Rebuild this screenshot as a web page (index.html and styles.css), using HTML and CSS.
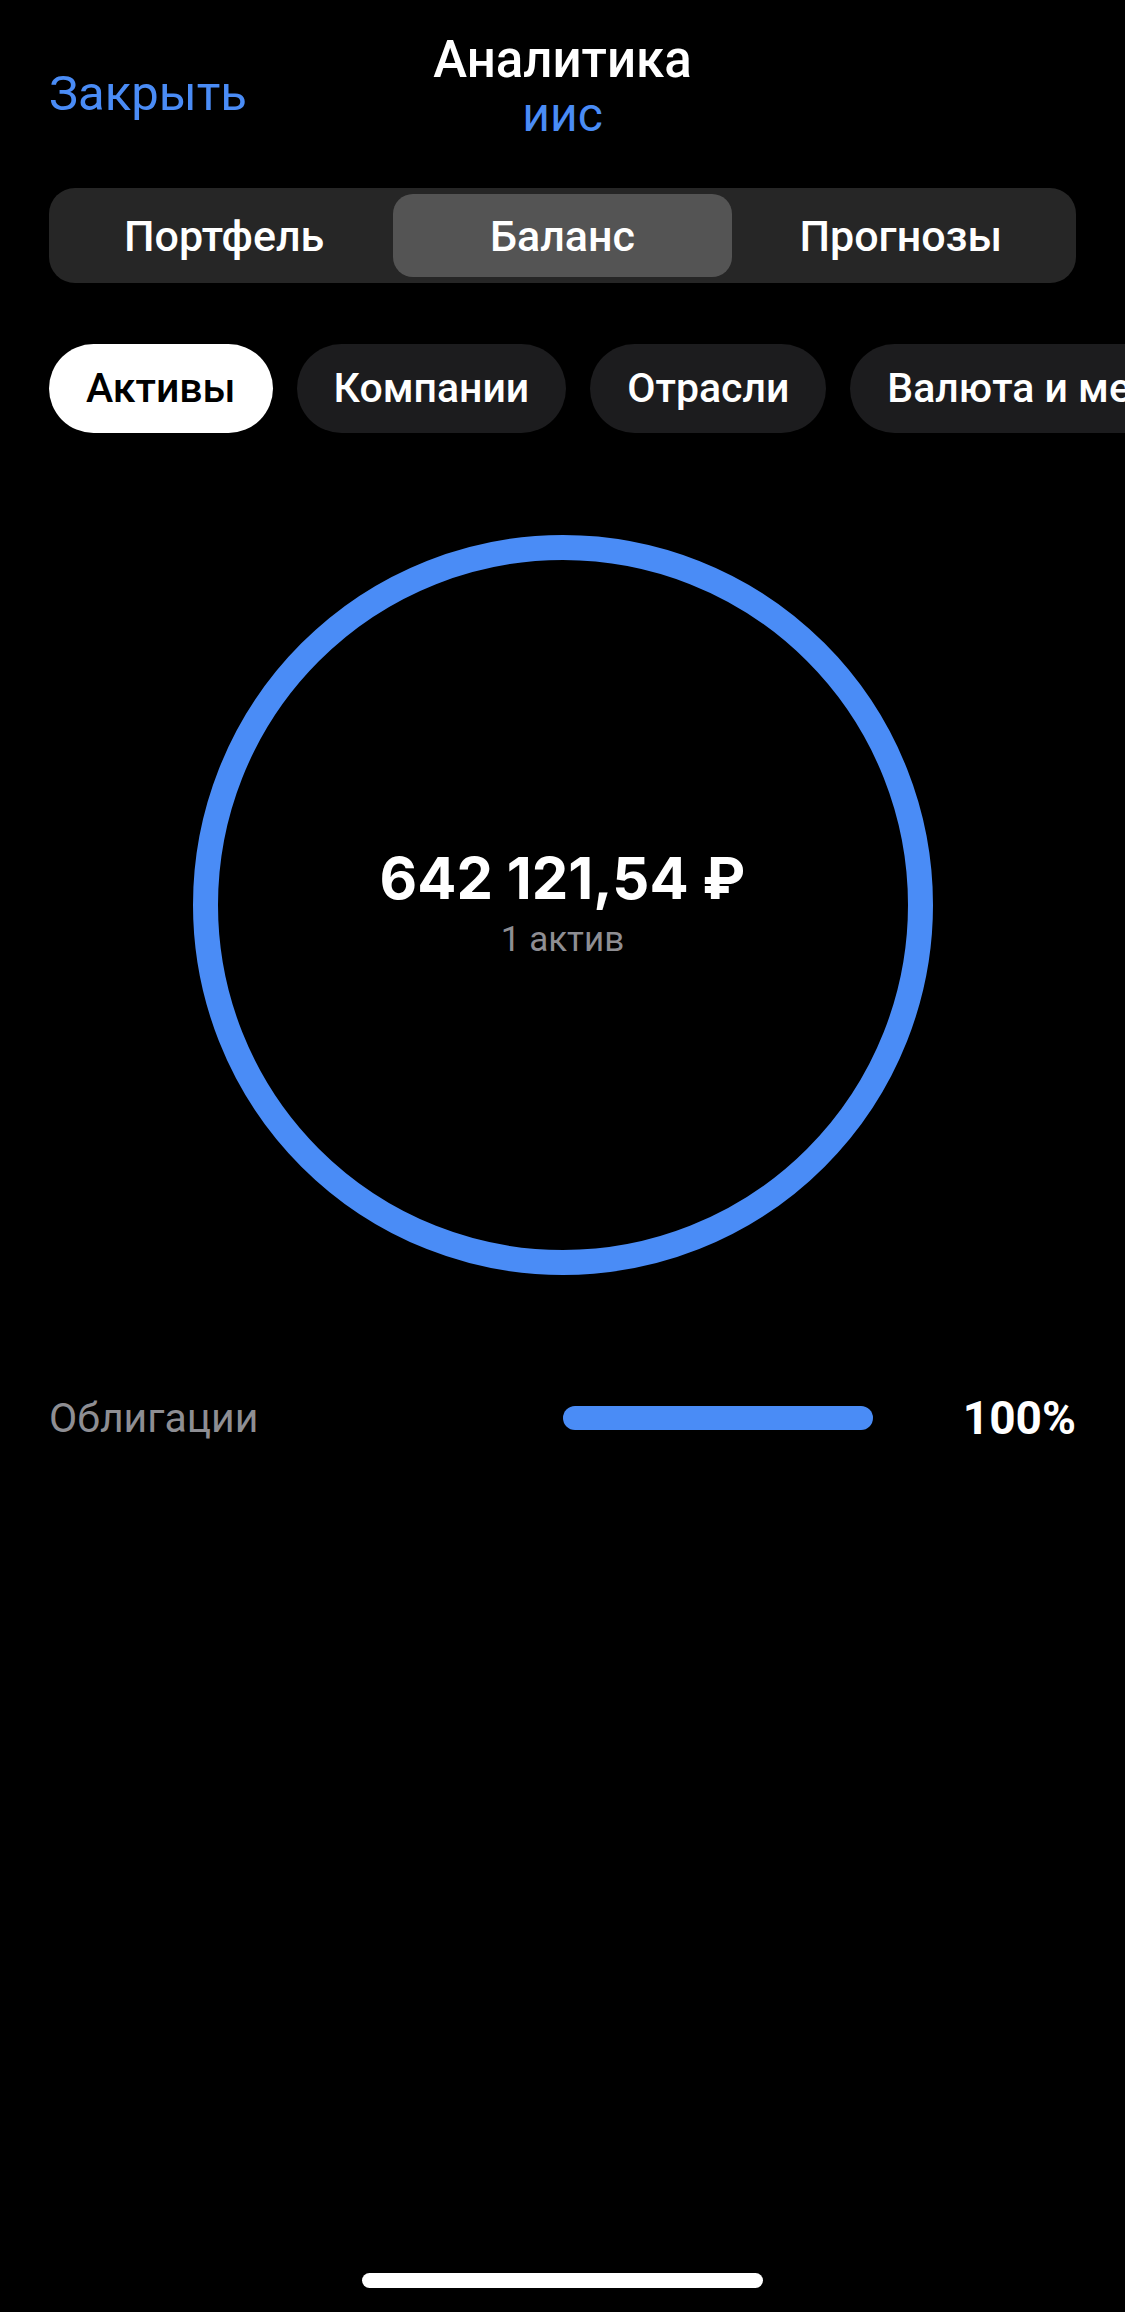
FILE: index.html
```html
<!DOCTYPE html>
<html>
<head lang="ru">
  <meta charset="UTF-8">
  <title>Аналитика</title>
  <link rel="stylesheet" href="styles.css">
</head>
<body>
<div class="screen">
  <div class="header">
    <a class="close" href="#">Закрыть</a>
    <div class="title">
      <div class="title-main">Аналитика</div>
      <div class="title-sub">иис</div>
    </div>
    <div></div>
  </div>

  <div class="segments">
    <span>Портфель</span>
    <span class="current">Баланс</span>
    <span>Прогнозы</span>
  </div>

  <div class="chips">
    <span class="chip current">Активы</span>
    <span class="chip">Компании</span>
    <span class="chip">Отрасли</span>
    <span class="chip">Валюта и металлы</span>
  </div>

  <div class="donut-wrap">
    <div class="donut">
      <div class="sum">642 121,54 ₽</div>
      <div class="count">1 актив</div>
    </div>
  </div>

  <ul class="rows">
    <li>
      <span class="name">Облигации</span>
      <span class="bar"><i style="width: 100%"></i></span>
      <span class="pct">100%</span>
    </li>
  </ul>

  <div class="home"></div>
</div>
</body>
</html>
```

FILE: styles.css
```css
* {
  margin: 0;
  padding: 0;
  box-sizing: border-box;
}

ul {
  list-style: none
}

body {
  background: #000;
  color: #fff;
  font-family: Roboto, "Noto Sans", Arial, sans-serif;
}

.screen {
  min-height: 2312px;
  display: flex;
  flex-direction: column;
  padding: 0 49px;
}

.header {
  display: grid;
  grid-template-columns: 1fr auto 1fr;
  align-items: center;
  padding-top: 32px;
  height: 188px;
  align-content: start;
}

.close {
  color: #4a8cf6;
  text-decoration: none;
  font-size: 49px;
  padding-top: 12px;
}

.title {
  text-align: center;
  line-height: 55px;
}

.title-main {
  font-size: 51px;
  font-weight: 500;
}

.title-sub {
  color: #4a8cf6;
  font-size: 48px;
}

.segments {
  display: flex;
  height: 95px;
  padding: 6px;
  background: #262626;
  border-radius: 26px;
}

.segments span {
  flex: 1;
  display: flex;
  align-items: center;
  justify-content: center;
  font-size: 43px;
  font-weight: 500;
  border-radius: 20px;
}

.segments span.current {
  background: #545454;
}

.chips {
  display: flex;
  gap: 24px;
  margin-top: 61px;
  margin-right: -49px;
  overflow: hidden;
  white-space: nowrap;
}

.chip {
  flex: none;
  height: 89px;
  line-height: 89px;
  padding: 0 37px;
  border-radius: 45px;
  background: #1c1c1e;
  font-size: 41px;
  font-weight: 500;
}

.chip.current {
  background: #fff;
  color: #000;
}

.donut-wrap {
  display: flex;
  justify-content: center;
  margin-top: 102px;
}

.donut {
  width: 740px;
  height: 740px;
  border: 25px solid #4a8cf6;
  border-radius: 50%;
  display: flex;
  flex-direction: column;
  align-items: center;
  justify-content: center;
}

.sum {
  font-family: Inter, Roboto, sans-serif;
  font-size: 58px;
  font-weight: 700;
  line-height: 64px;
}

.count {
  color: #8e8e93;
  font-size: 35px;
  line-height: 48px;
  margin-top: 6px;
}

.rows {
  margin-top: 114px;
}

.rows li {
  display: grid;
  grid-template-columns: 1fr 310px 203px;
  align-items: center;
  height: 58px;
}

.name {
  color: #8e8e93;
  font-size: 41px;
}

.bar {
  height: 24px;
}

.bar i {
  display: block;
  height: 24px;
  border-radius: 12px;
  background: #4a8cf6;
}

.pct {
  text-align: right;
  font-size: 46px;
  font-weight: 700;
}

.home {
  margin: auto auto 24px;
  width: 401px;
  height: 15px;
  border-radius: 8px;
  background: #fff;
}
```
